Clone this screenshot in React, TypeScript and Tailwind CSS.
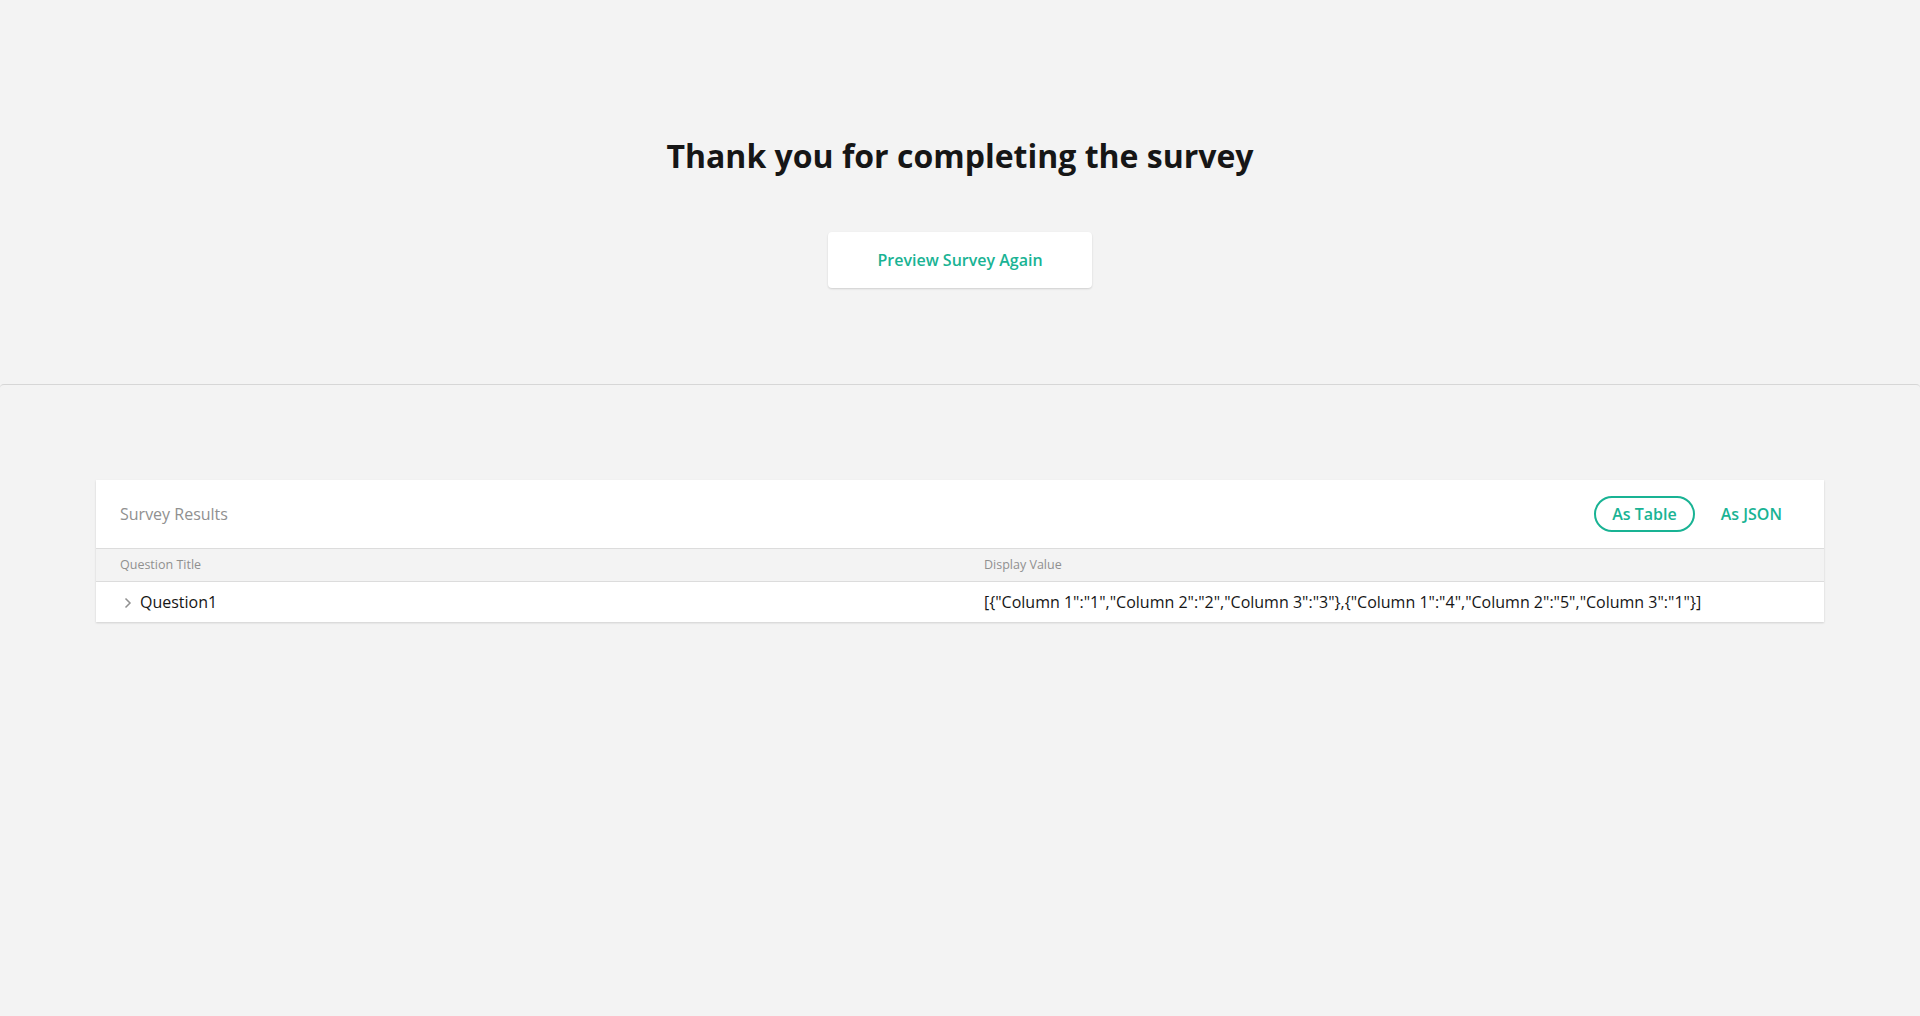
import React from "react";

export default function App() {
  return (
    <div
      className="min-h-[1016px] w-full bg-[#f3f3f3] text-[#161616]"
      style={{ fontFamily: '"Open Sans", "Noto Sans", sans-serif' }}
    >
      <div className="flex flex-col items-center pt-[136px] pb-[96px]">
        <h1 className="text-[32px] leading-[40px] font-bold text-[#161616]">
          Thank you for completing the survey
        </h1>
        <button className="mt-[56px] h-[56px] w-[264px] rounded-[4px] bg-white text-[16px] font-semibold text-[#19b394] shadow-[0_1px_2px_rgba(0,0,0,0.15)]">
          Preview Survey Again
        </button>
      </div>
      <div className="border-t border-[#d6d6d6] rounded-t-[4px] pt-[95px] pb-[96px]">
        <div className="mx-[96px] bg-white shadow-[0_1px_2px_rgba(0,0,0,0.15)]">
          <div className="flex h-[68px] items-center justify-between pl-6 pr-[42px]">
            <span className="text-[16px] text-[#909090]">Survey Results</span>
            <div className="flex items-center gap-[26px]">
              <button className="h-[36px] rounded-full border-2 border-[#19b394] px-[16px] text-[16px] font-semibold text-[#19b394]">
                As Table
              </button>
              <button className="text-[16px] font-semibold text-[#19b394]">As JSON</button>
            </div>
          </div>
          <div className="grid grid-cols-[888px_1fr] h-[34px] items-center border-y border-[#dcdcdc] bg-[#f3f3f3] text-[12.5px] text-[#909090]">
            <div className="pl-6">Question Title</div>
            <div>Display Value</div>
          </div>
          <div className="grid grid-cols-[888px_1fr] h-[40px] items-center text-[16px]">
            <div className="flex items-center pl-[28px]">
              <svg width="8" height="12" viewBox="0 0 8 12" className="mr-[8px] mt-[2px]">
                <path d="M1.5 1.5 L6 6 L1.5 10.5" fill="none" stroke="#909090" strokeWidth="1.5" />
              </svg>
              <span className="font-medium text-[#161616]">Question1</span>
            </div>
            <div className="text-[#161616]">
              [{'{'}"Column 1":"1","Column 2":"2","Column 3":"3"{'}'},{'{'}"Column 1":"4","Column 2":"5","Column 3":"1"{'}'}]
            </div>
          </div>
        </div>
      </div>
    </div>
  );
}
